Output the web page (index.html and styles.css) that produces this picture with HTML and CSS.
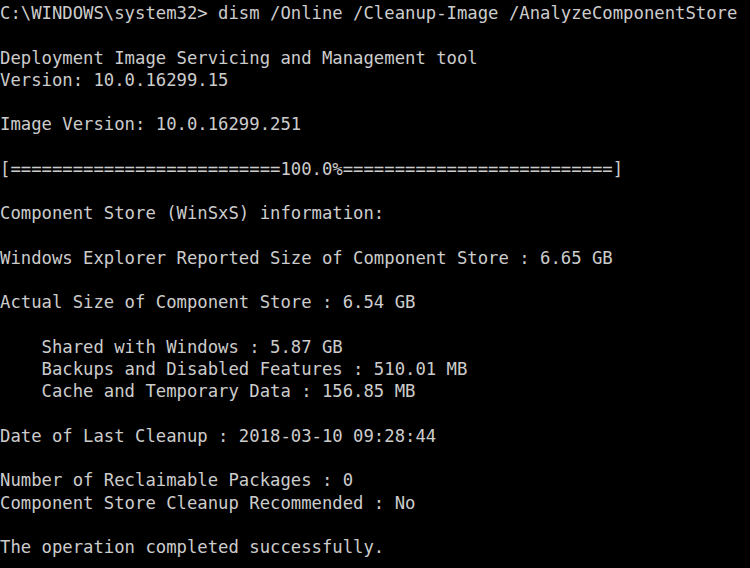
FILE: index.html
```html
<!DOCTYPE html>
<html>
<head>
<meta charset="utf-8">
<link rel="stylesheet" href="styles.css">
</head>
<body>
<pre class="console">C:\WINDOWS\system32&gt; dism /Online /Cleanup-Image /AnalyzeComponentStore

Deployment Image Servicing and Management tool
Version: 10.0.16299.15

Image Version: 10.0.16299.251

[==========================100.0%==========================]

Component Store (WinSxS) information:

Windows Explorer Reported Size of Component Store : 6.65 GB

Actual Size of Component Store : 6.54 GB

    Shared with Windows : 5.87 GB
    Backups and Disabled Features : 510.01 MB
    Cache and Temporary Data : 156.85 MB

Date of Last Cleanup : 2018-03-10 09:28:44

Number of Reclaimable Packages : 0
Component Store Cleanup Recommended : No

The operation completed successfully.
</pre>
</body>
</html>
```
FILE: styles.css
```css
html, body {
  margin: 0;
  padding: 0;
  background: #000;
  width: 750px;
  height: 568px;
  overflow: hidden;
}
.console {
  margin: 0;
  padding: 2px 0 0 0;
  color: #cccccc;
  font-family: "DejaVu Sans Mono", "Liberation Mono", monospace;
  font-size: 17.25px;
  line-height: 22.25px;
  white-space: pre;
}
```
